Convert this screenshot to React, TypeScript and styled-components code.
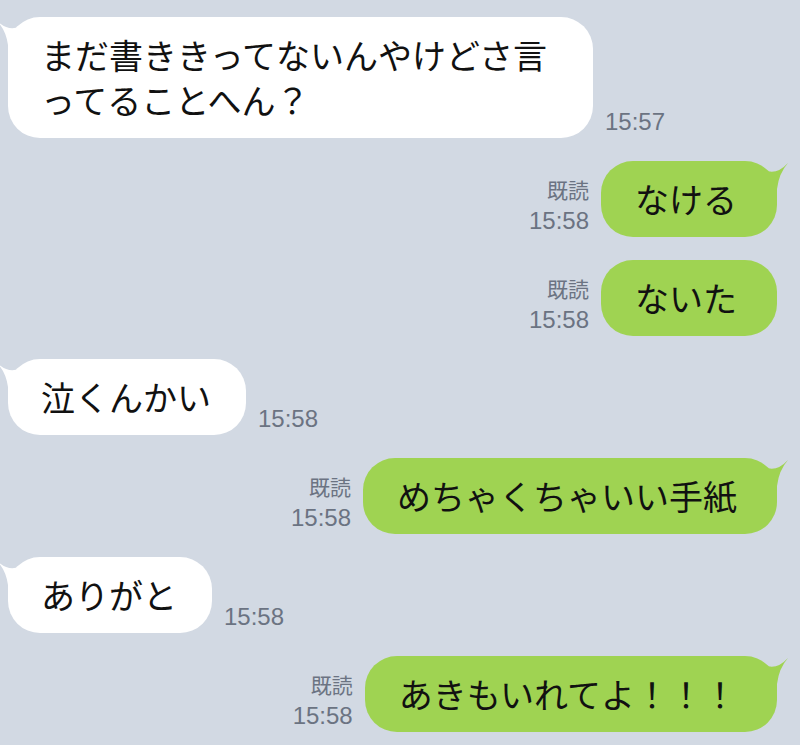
import React from "react";
import styled, { createGlobalStyle } from "styled-components";

const GlobalStyle = createGlobalStyle`
  html, body {
    margin: 0;
    padding: 0;
    background: #d2d9e3;
  }
  body {
    font-family: "Noto Sans CJK JP", "Noto Sans", sans-serif;
    overflow: hidden;
  }
`;

const Chat = styled.div`
  width: 800px;
  height: 745px;
  box-sizing: border-box;
  background: #d2d9e3;
  padding: 17px 23px 0 8px;
  display: flex;
  flex-direction: column;
  gap: 23px;
  overflow: hidden;
`;

const Row = styled.div<{ $mine?: boolean }>`
  display: flex;
  align-items: flex-end;
  justify-content: ${(p) => (p.$mine ? "flex-end" : "flex-start")};
  gap: 12px;
`;

const Bubble = styled.div<{ $mine?: boolean; $wide?: boolean }>`
  position: relative;
  box-sizing: border-box;
  background: ${(p) => (p.$mine ? "#9fd352" : "#ffffff")};
  color: #111;
  border-radius: 32px;
  padding: ${(p) => (p.$mine ? "15px 40px 16px 34px" : "15px 35px 16px 33px")};
  ${(p) => (p.$wide ? "width: 585px;" : "")}
  font-family: "Noto Sans CJK JP", sans-serif;
  font-size: 34px;
  line-height: 45px;
  white-space: nowrap;
`;

const TailSvg = styled.svg<{ $mine?: boolean }>`
  position: absolute;
  top: 0;
  width: 30px;
  height: 40px;
  ${(p) => (p.$mine ? "right: -12px;" : "left: -12px;")}
  overflow: visible;
`;

const Time = styled.span`
  font-family: "Liberation Sans", Arial, sans-serif;
  font-size: 24px;
  line-height: 24px;
  color: #6b7382;
  margin-bottom: 4px;
`;

const Meta = styled.div`
  display: flex;
  flex-direction: column;
  align-items: flex-end;
  margin-bottom: 4px;
`;

const Read = styled.span`
  font-family: "Noto Sans CJK JP", sans-serif;
  font-size: 21px;
  line-height: 24px;
  color: #6b7382;
  margin-bottom: 8px;
`;

const MetaTime = styled.span`
  font-family: "Liberation Sans", Arial, sans-serif;
  font-size: 24px;
  line-height: 24px;
  color: #6b7382;
`;

function Tail({ mine }: { mine?: boolean }) {
  const fill = mine ? "#9fd352" : "#ffffff";
  return (
    <TailSvg $mine={mine} viewBox="0 0 30 40" aria-hidden>
      {mine ? (
        <path d="M0 5 Q14 18 29 2 Q20 12 18 28 L18 40 L0 40 Z" fill={fill} />
      ) : (
        <path d="M30 5 Q16 18 1 4 Q10 13 12 28 L12 40 L30 40 Z" fill={fill} />
      )}
    </TailSvg>
  );
}

type Msg = {
  mine: boolean;
  lines: string[];
  time: string;
  tail?: boolean;
  wide?: boolean;
};

const messages: Msg[] = [
  { mine: false, lines: ["まだ書ききってないんやけどさ言", "ってることへん？"], time: "15:57", tail: true, wide: true },
  { mine: true, lines: ["なける"], time: "15:58", tail: true },
  { mine: true, lines: ["ないた"], time: "15:58" },
  { mine: false, lines: ["泣くんかい"], time: "15:58", tail: true },
  { mine: true, lines: ["めちゃくちゃいい手紙"], time: "15:58", tail: true },
  { mine: false, lines: ["ありがと"], time: "15:58", tail: true },
  { mine: true, lines: ["あきもいれてよ！！！"], time: "15:58", tail: true },
];

function BubbleText({ lines }: { lines: string[] }) {
  return (
    <>
      {lines.map((l, i) => (
        <React.Fragment key={i}>
          {i > 0 && <br />}
          {l}
        </React.Fragment>
      ))}
    </>
  );
}

export default function App() {
  return (
    <>
      <GlobalStyle />
      <Chat>
        {messages.map((m, i) =>
          m.mine ? (
            <Row key={i} $mine>
              <Meta>
                <Read>既読</Read>
                <MetaTime>{m.time}</MetaTime>
              </Meta>
              <Bubble $mine>
                {m.tail && <Tail mine />}
                <BubbleText lines={m.lines} />
              </Bubble>
            </Row>
          ) : (
            <Row key={i}>
              <Bubble $wide={m.wide}>
                {m.tail && <Tail />}
                <BubbleText lines={m.lines} />
              </Bubble>
              <Time>{m.time}</Time>
            </Row>
          )
        )}
      </Chat>
    </>
  );
}
